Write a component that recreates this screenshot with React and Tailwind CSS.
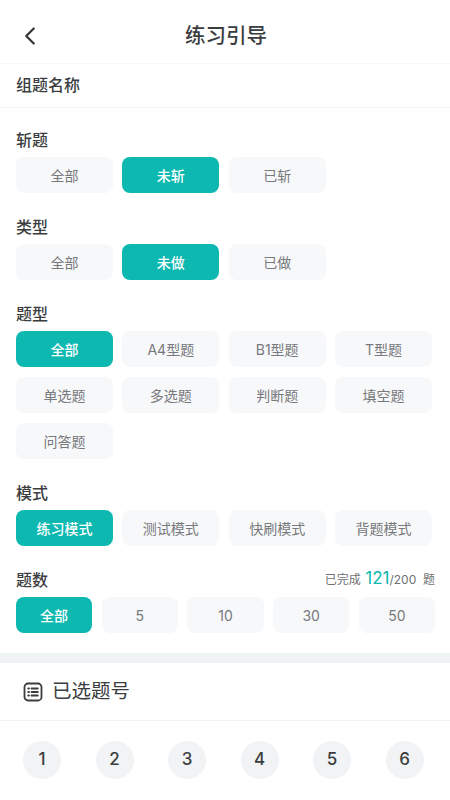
import React from 'react';
import { ChevronLeft } from 'lucide-react';

const cjk = 'Inter,"Noto Sans CJK SC","Noto Sans",sans-serif';

const Chip = ({ label, active }) => (
  <div
    className={`h-9 flex items-center justify-center rounded-lg text-[14px] ${
      active ? 'bg-[#0cb8b0] text-white font-medium' : 'bg-[#f7f8fa] text-[#77797c]'
    }`}
  >
    {label}
  </div>
);

const Section = ({ title, items, active, extra, cols = 'grid-cols-4', gap = 'gap-x-[9.6px]' }) => (
  <div className="mb-[14px]">
    <div className="h-[37px] pb-[5px] flex items-end justify-between">
      <span className="text-[16px] leading-[24px] text-[#3b3d3f] font-medium">{title}</span>
      {extra}
    </div>
    <div className={`grid ${cols} ${gap} gap-y-[10px]`}>
      {items.map((item) => (
        <Chip key={item} label={item} active={item === active} />
      ))}
    </div>
  </div>
);

const ListIcon = () => (
  <svg width="20" height="20" viewBox="0 0 20 20" fill="none" stroke="#3a3c3e" strokeWidth="1.8" strokeLinecap="round">
    <rect x="1.5" y="1.5" width="17" height="17" rx="3.5" />
    <path d="M5.2 6.5h.8M5.2 10h.8M5.2 13.5h.8M8.5 6.5h6.3M8.5 10h6.3M8.5 13.5h6.3" />
  </svg>
);

export default function App() {
  return (
    <div className="w-[450px] h-[800px] overflow-hidden bg-white" style={{ fontFamily: cjk }}>
      <div className="h-[64px] flex items-center justify-center relative border-b border-[#f6f7f7]">
        <ChevronLeft className="absolute left-[15px] top-[21px] text-[#333537]" size={30} strokeWidth={1.8} />
        <span className="text-[20.5px] mt-[9px] ml-[2px] text-[#3b3d3f] font-medium">练习引导</span>
      </div>
      <div className="h-[44px] pb-[2px] px-4 flex items-center border-b border-[#f4f5f5] text-[16px] text-[#3b3d3f] font-medium">
        组题名称
      </div>
      <div className="pl-4 pr-[18px] pt-[12px]">
        <Section title="斩题" items={['全部', '未斩', '已斩']} active="未斩" />
        <Section title="类型" items={['全部', '未做', '已做']} active="未做" />
        <Section
          title="题型"
          items={['全部', 'A4型题', 'B1型题', 'T型题', '单选题', '多选题', '判断题', '填空题', '问答题']}
          active="全部"
        />
        <Section title="模式" items={['练习模式', '测试模式', '快刷模式', '背题模式']} active="练习模式" />
        <Section
          title="题数"
          items={['全部', '5', '10', '30', '50']}
          active="全部"
          cols="grid-cols-5"
          gap="gap-x-[9.5px] w-[419px]"
          extra={
            <span className="text-[12px] leading-[24px] text-[#6f7174] -mr-[3px]">
              已完成 <span className="text-[17px] ml-[1px] text-[#0cb8b0]">121</span>/200&nbsp;&nbsp;题
            </span>
          }
        />
      </div>
      <div className="h-[10px] mt-[20px] bg-[#f0f3f3]" />
      <div className="h-[58px] pl-[23px] flex items-center gap-[9px] border-b border-[#f2f3f3]">
        <ListIcon />
        <span className="text-[19.5px] text-[#3b3d3f]">已选题号</span>
      </div>
      <div className="pt-[20px] pl-[23px] flex gap-[34.5px]">
        {[1, 2, 3, 4, 5, 6].map((n) => (
          <div
            key={n}
            className="w-[38px] h-[38px] rounded-full bg-[#f1f3f4] flex items-center justify-center text-[17px] font-medium text-[#3b3d3f]"
          >
            {n}
          </div>
        ))}
      </div>
    </div>
  );
}
